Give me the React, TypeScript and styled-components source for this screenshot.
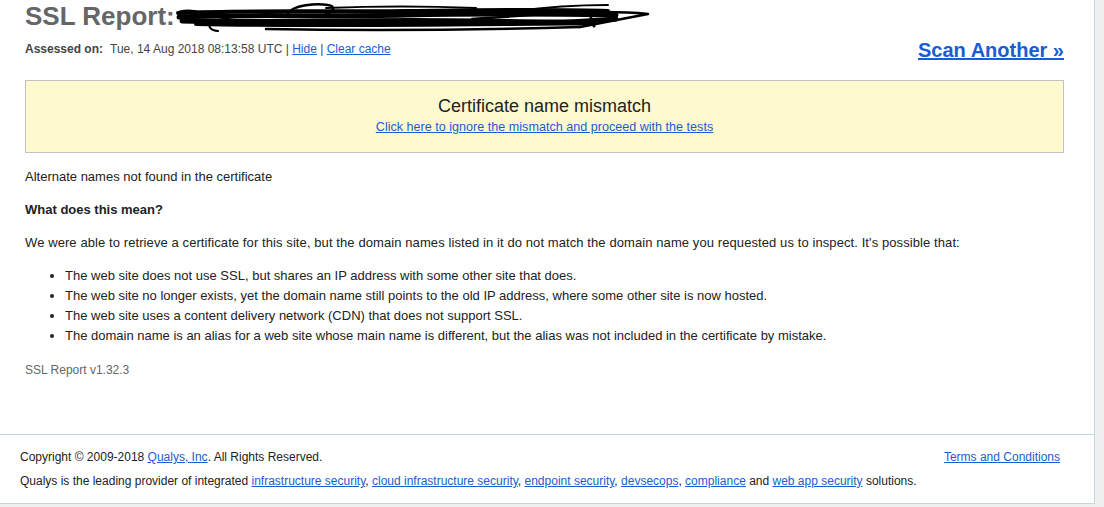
import React from 'react';
import styled, { createGlobalStyle } from 'styled-components';

const GlobalStyle = createGlobalStyle`
  html, body {
    margin: 0;
    padding: 0;
    background: #f0f0f0;
    font-family: "Liberation Sans", Arial, sans-serif;
  }
`;

const linkBlue = '#1a5cd4';

const Page = styled.div`
  width: 1094px;
  background: #fff;
  border-right: 1px solid #c3d7de;
  border-bottom: 1px solid #c3d7de;
`;

const Main = styled.div`
  padding: 0 30px 0 25px;
  height: 434px;
  box-sizing: border-box;
`;

const Title = styled.h1`
  display: flex;
  align-items: flex-start;
  margin: 0;
  height: 32px;
  font-size: 26px;
  line-height: 32px;
  font-weight: bold;
  color: #666;
  white-space: nowrap;
`;

const Scribble = styled.svg`
  width: 480px;
  height: 36px;
  margin-left: 1px;
  flex: none;
`;

const MetaRow = styled.div`
  display: flex;
  justify-content: space-between;
  align-items: center;
  height: 28px;
  margin-top: 3px;
`;

const Assessed = styled.div`
  font-size: 12px;
  line-height: 16px;
  color: #444;

  b {
    margin-right: 7px;
  }
`;

const A = styled.a`
  color: ${linkBlue};
  text-decoration: underline;
`;

const ScanLink = styled(A)`
  font-size: 20px;
  line-height: 24px;
  font-weight: bold;
  margin-top: 1px;
`;

const Warning = styled.div`
  margin-top: 17px;
  background: #fef9cf;
  border: 1px solid #c2c2c2;
  padding: 14px 0 17px;
  text-align: center;
`;

const WarningTitle = styled.div`
  font-size: 18px;
  line-height: 22px;
  color: #222;
`;

const WarningLink = styled(A)`
  display: inline-block;
  margin-top: 2px;
  font-size: 12.6px;
  line-height: 16px;
`;

const Para = styled.p<{ $bold?: boolean; $wide?: boolean }>`
  margin: 15px 0 0;
  font-size: 13px;
  line-height: 18px;
  color: #222;
  font-weight: ${(p) => (p.$bold ? 'bold' : 'normal')};
  letter-spacing: ${(p) => (p.$wide ? '0.09px' : 'normal')};
`;

const List = styled.ul`
  margin: 14px 0 0;
  padding-left: 40px;
  font-size: 13px;
  line-height: 20px;
  color: #222;
`;

const Version = styled.div`
  margin-top: 16px;
  font-size: 12px;
  line-height: 16px;
  color: #666;
`;

const Footer = styled.footer`
  border-top: 1px solid #bcd6df;
  padding: 14px 34px 14px 20px;
  font-size: 12px;
  line-height: 16px;
  color: #222;
`;

const FooterRow = styled.div`
  display: flex;
  justify-content: space-between;

  & + & {
    margin-top: 8px;
  }
`;

const reasons = [
  'The web site does not use SSL, but shares an IP address with some other site that does.',
  'The web site no longer exists, yet the domain name still points to the old IP address, where some other site is now hosted.',
  'The web site uses a content delivery network (CDN) that does not support SSL.',
  'The domain name is an alias for a web site whose main name is different, but the alias was not included in the certificate by mistake.',
];

const solutions = [
  'infrastructure security',
  'cloud infrastructure security',
  'endpoint security',
  'devsecops',
];

const App = () => {
  return (
    <>
      <GlobalStyle />
      <Page>
        <Main>
          <Title>
            SSL Report:
            <Scribble viewBox="0 0 480 36" fill="none" stroke="#000" strokeLinecap="round" strokeLinejoin="round">
              {/* dense band over the host name */}
              <path d="M2 13 C60 10 140 12 230 11 S380 9 432 11" strokeWidth="4" />
              <path d="M3 17 C60 14 140 17 230 15 S380 14 440 15" strokeWidth="5" />
              <path d="M6 21 C80 23 200 19 300 21 S400 22 440 19" strokeWidth="5" />
              <path d="M20 24 C100 26 220 25 330 24 S400 24 418 22" strokeWidth="4" />
              <path d="M4 12 C12 10 18 11 24 13" strokeWidth="3" />
              {/* loops and arches */}
              <path d="M42 31 C28 29 30 20 60 17 C90 15 110 16 130 15" strokeWidth="2" />
              <path d="M112 13 C118 5 140 3 152 5 C160 6 158 12 150 14" strokeWidth="2.5" />
              <path d="M150 8 C200 6 250 6 300 8" strokeWidth="2" />
              <path d="M340 11 C370 7 400 5 432 5" strokeWidth="2" />
              <path d="M296 19 C360 15 420 9 472 14 L404 27" strokeWidth="2.5" />
              <path d="M90 29 C200 31 300 30 404 27" strokeWidth="2.5" />
              <path d="M415 18 L418 26" strokeWidth="3" />
            </Scribble>
          </Title>
          <MetaRow>
            <Assessed>
              <b>Assessed on:</b>Tue, 14 Aug 2018 08:13:58 UTC | <A href="#">Hide</A> |{' '}
              <A href="#">Clear cache</A>
            </Assessed>
            <ScanLink href="#">Scan Another &raquo;</ScanLink>
          </MetaRow>

          <Warning>
            <WarningTitle>Certificate name mismatch</WarningTitle>
            <WarningLink href="#">Click here to ignore the mismatch and proceed with the tests</WarningLink>
          </Warning>

          <Para>Alternate names not found in the certificate</Para>
          <Para $bold>What does this mean?</Para>
          <Para $wide>
            We were able to retrieve a certificate for this site, but the domain names listed in it do not
            match the domain name you requested us to inspect. It's possible that:
          </Para>
          <List>
            {reasons.map((r, i) => (
              <li key={i}>{r}</li>
            ))}
          </List>
          <Version>SSL Report v1.32.3</Version>
        </Main>

        <Footer>
          <FooterRow>
            <span>
              Copyright &copy; 2009-2018 <A href="#">Qualys, Inc</A>. All Rights Reserved.
            </span>
            <A href="#">Terms and Conditions</A>
          </FooterRow>
          <FooterRow>
            <span>
              Qualys is the leading provider of integrated{' '}
              {solutions.map((s, i) => (
                <React.Fragment key={i}>
                  <A href="#">{s}</A>,{' '}
                </React.Fragment>
              ))}
              <A href="#">compliance</A> and <A href="#">web app security</A> solutions.
            </span>
          </FooterRow>
        </Footer>
      </Page>
    </>
  );
};

export default App;
